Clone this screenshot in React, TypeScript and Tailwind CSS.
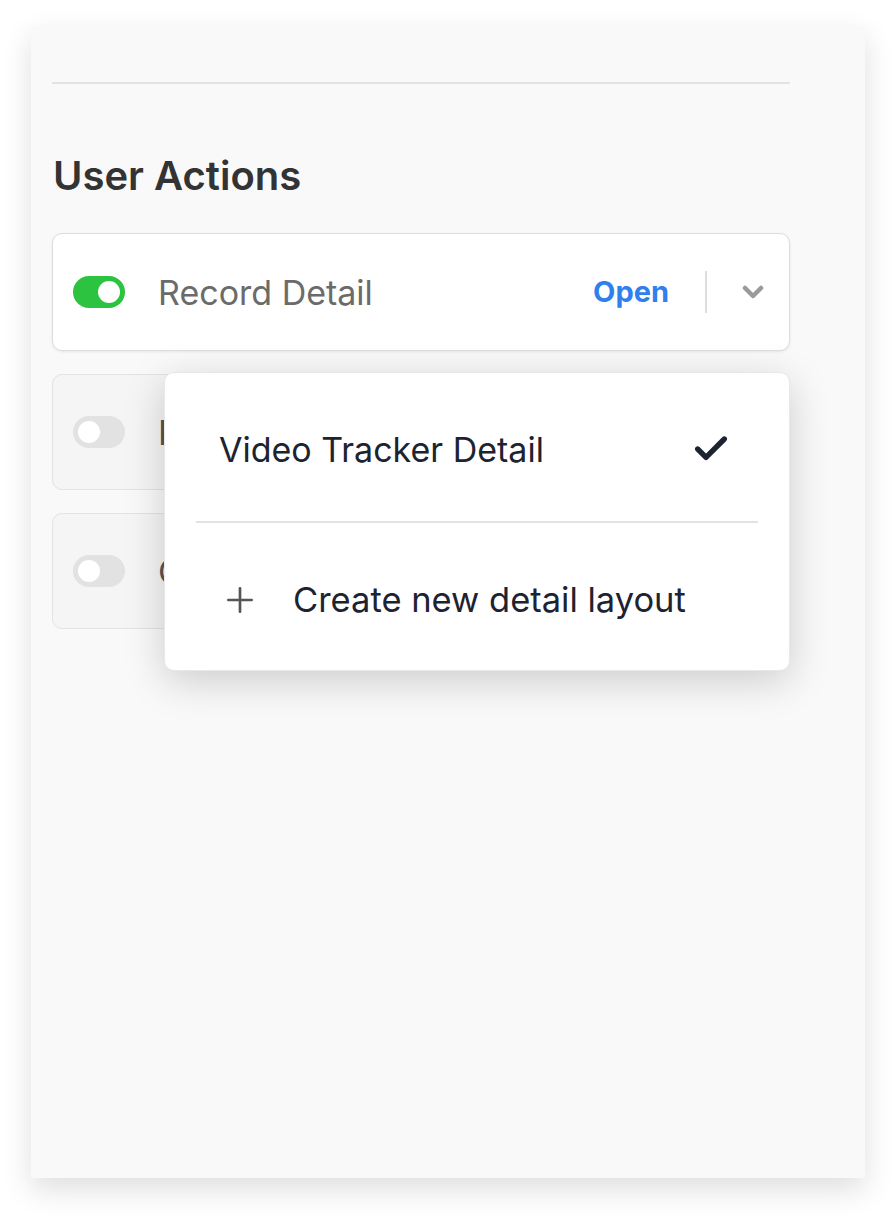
import { Check, ChevronDown, Plus } from "lucide-react";

type Action = {
  label: string;
  enabled: boolean;
};

const actions: Action[] = [
  { label: "Record Detail", enabled: true },
  { label: "Record List", enabled: false },
  { label: "Custom Action", enabled: false },
];

function Toggle({ on }: { on: boolean }) {
  return (
    <div
      className={
        on
          ? "w-[52px] h-[32px] rounded-full bg-[#2bc33f] flex items-center justify-end px-[5px] shrink-0"
          : "w-[52px] h-[32px] rounded-full bg-[#e2e2e2] flex items-center justify-start px-[5px] shrink-0"
      }
    >
      <div className="w-[22px] h-[22px] rounded-full bg-white" />
    </div>
  );
}

export default function App() {
  return (
    <div
      className="min-h-screen bg-white pt-[25px] pl-[31px]"
      style={{ fontFamily: "Inter, 'Noto Sans', sans-serif" }}
    >
      <div className="w-[834px] h-[1153px] bg-[#f9f9f9] rounded-t-[6px] shadow-[0_12px_30px_rgba(0,0,0,0.13)] pl-[21px] pr-[75px] pt-[57px]">
        {/* Divider */}
        <div className="h-[2px] bg-[#e3e3e3]" />

        {/* Header */}
        <h2 className="mt-[68px] text-[40px] leading-[48px] font-semibold text-[#333333] pl-[1px]">
          User Actions
        </h2>

        {/* Action cards */}
        <div className="relative mt-[33px] flex flex-col gap-[23px]">
          {actions.map((action, i) => (
            <div
              key={action.label}
              className={
                i === 0
                  ? "h-[118px] rounded-[10px] border border-[#dddddd] bg-white shadow-[0_1px_3px_rgba(0,0,0,0.08)] flex items-center pl-[20px] pr-[20px]"
                  : "h-[116px] rounded-[10px] border border-[#e3e3e3] bg-[#f5f5f5] flex items-center pl-[20px] pr-[20px]"
              }
            >
              <Toggle on={action.enabled} />
              <span
                className={
                  i === 0
                    ? "ml-[33px] text-[34px] text-[#6b6b6b]"
                    : "ml-[33px] text-[34px] text-[#555555]"
                }
              >
                {action.label}
              </span>
              {i === 0 && (
                <div className="ml-auto flex items-center">
                  <span className="text-[29px] font-bold text-[#2f80ed]">Open</span>
                  <div className="ml-[36px] w-[2px] h-[42px] bg-[#dddddd]" />
                  <ChevronDown className="ml-[30px] w-[32px] h-[32px] text-[#9a9a9a]" strokeWidth={3.4} />
                </div>
              )}
            </div>
          ))}

          {/* Layout dropdown */}
          <div className="absolute left-[112px] top-[139px] w-[626px] h-[299px] rounded-[10px] bg-white border border-[#e8e8e8] shadow-[0_10px_40px_rgba(0,0,0,0.18)] flex flex-col">
            <div className="h-[148px] flex items-center pl-[54px] pr-[58px] pt-[4px]">
              <span className="text-[34px] text-[#1d2330]">Video Tracker Detail</span>
              <Check className="ml-auto w-[40px] h-[40px] text-[#1d2330]" strokeWidth={3.2} />
            </div>
            <div className="mx-[31px] h-[2px] bg-[#e2e2e2]" />
            <div className="flex-1 flex items-center pl-[55px] pt-[6px]">
              <Plus className="w-[40px] h-[40px] text-[#555555]" strokeWidth={1.6} />
              <span className="ml-[33px] text-[34.5px] text-[#1d2330]">Create new detail layout</span>
            </div>
          </div>
        </div>
      </div>
    </div>
  );
}
